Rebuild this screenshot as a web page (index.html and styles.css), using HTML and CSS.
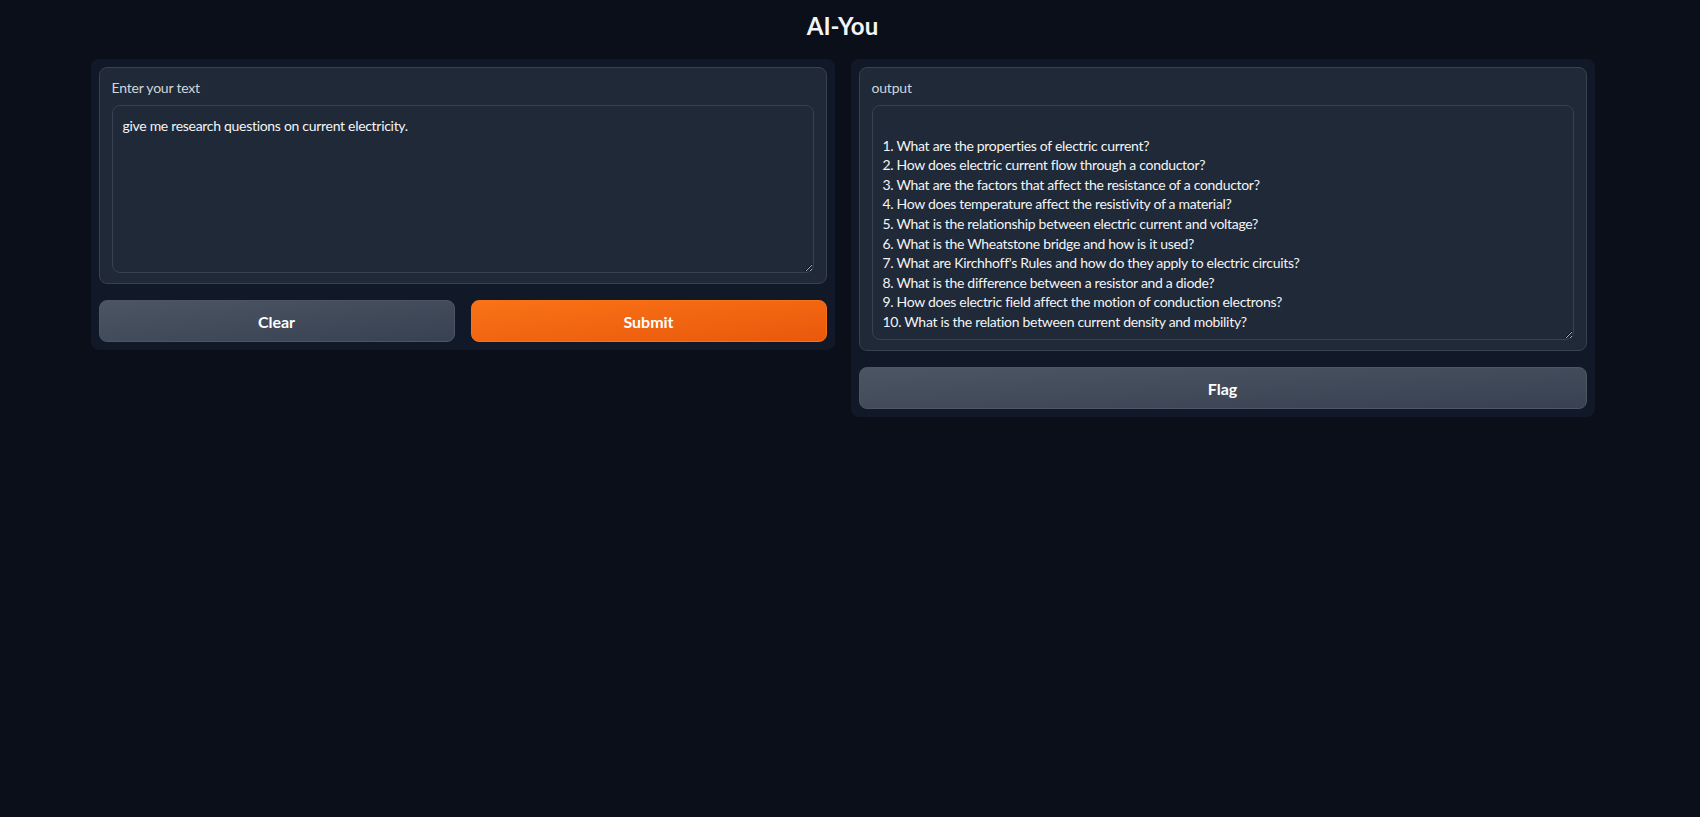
FILE: index.html
```html
<!DOCTYPE html>
<html lang="en">
<head>
<meta charset="utf-8">
<title>AI-You</title>
<link rel="stylesheet" href="styles.css">
</head>
<body>
<div class="app">
  <div class="container">
    <h1 class="title">AI-You</h1>
    <div class="row">
      <div class="panel">
        <div class="block">
          <label class="label" for="inp">Enter your text</label>
          <textarea id="inp" class="textbox input-box">give me research questions on current electricity.</textarea>
        </div>
        <div class="btn-row">
          <button class="btn btn-secondary">Clear</button>
          <button class="btn btn-primary">Submit</button>
        </div>
      </div>
      <div class="panel">
        <div class="block">
          <label class="label" for="out">output</label>
          <textarea id="out" class="textbox output-box">

1. What are the properties of electric current?
2. How does electric current flow through a conductor?
3. What are the factors that affect the resistance of a conductor?
4. How does temperature affect the resistivity of a material?
5. What is the relationship between electric current and voltage?
6. What is the Wheatstone bridge and how is it used?
7. What are Kirchhoff's Rules and how do they apply to electric circuits?
8. What is the difference between a resistor and a diode?
9. How does electric field affect the motion of conduction electrons?
10. What is the relation between current density and mobility?</textarea>
        </div>
        <button class="btn btn-secondary btn-full">Flag</button>
      </div>
    </div>
  </div>
</div>
</body>
</html>
```

FILE: styles.css
```css
html, body {
  margin: 0;
  padding: 0;
  background: #0b0f19;
  color-scheme: dark;
}
body {
  font-family: "Lato", "Noto Sans", sans-serif;
  color: #e5e7eb;
  min-height: 817px;
}
.app {
  width: 1685px;
}
.container {
  max-width: 1536px;
  margin: 0 auto;
  padding: 10px 16px 0;
  box-sizing: border-box;
}
.title {
  margin: 0 0 17px;
  text-align: center;
  font-size: 24px;
  line-height: 32px;
  font-weight: 700;
  color: #f3f4f6;
}
.row {
  display: flex;
  gap: 16px;
  align-items: flex-start;
}
.panel {
  flex: 1 1 0;
  background: #111827;
  border-radius: 8px;
  padding: 8px;
  display: flex;
  flex-direction: column;
  gap: 16px;
}
.block {
  background: #1f2937;
  border: 1px solid #374151;
  border-radius: 8px;
  padding: 11px 12px 10px;
  display: flex;
  flex-direction: column;
}
.label {
  font-size: 14px;
  line-height: 18px;
  color: #d1d5db;
  margin-bottom: 8px;
  letter-spacing: -0.2px;
}
.textbox {
  display: block;
  box-sizing: border-box;
  width: 100%;
  background: #1f2937;
  border: 1px solid #374151;
  border-radius: 8px;
  padding: 10px 10px;
  color: #f3f4f6;
  font-family: inherit;
  font-size: 14px;
  line-height: 19.6px;
  letter-spacing: -0.3px;
  outline: none;
  resize: vertical;
  overflow: hidden;
  margin: 0;
}
.input-box {
  height: 168px;
}
.output-box {
  height: 235px;
}
.btn-row {
  display: flex;
  gap: 16px;
}
.btn {
  flex: 1 1 0;
  height: 42px;
  border-radius: 8px;
  font-family: inherit;
  font-size: 16px;
  font-weight: 700;
  color: #ffffff;
  cursor: pointer;
  padding: 0;
}
.btn-secondary {
  background: linear-gradient(to bottom right, #4b5563, #374151);
  border: 1px solid #4b5563;
}
.btn-primary {
  background: linear-gradient(to bottom right, #f97316, #ea580c);
  border: 1px solid #f97316;
}
.btn-full {
  flex: none;
  width: 100%;
}
```
